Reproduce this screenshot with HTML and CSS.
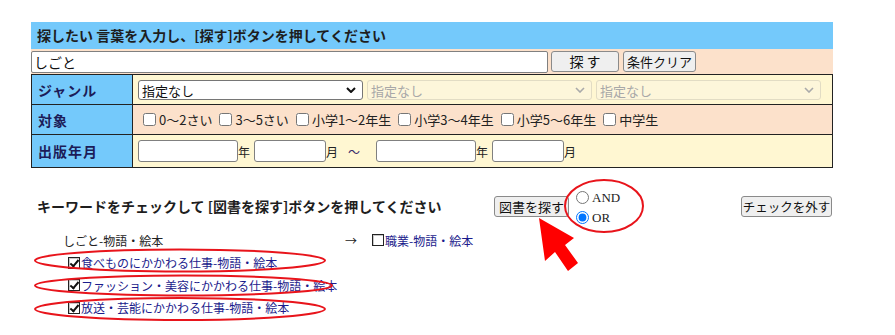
FILE: index.html
```html
<!DOCTYPE html>
<html lang="ja">
<head>
  <meta charset="UTF-8">
  <title>絵本をさがす</title>
  <link rel="stylesheet" href="styles.css">
</head>
<body>
  <div class="page">
    <form class="search">
      <div class="search-title">探したい 言葉を入力し、[探す]ボタンを押してください</div>
      <div class="search-bar">
        <input class="keyword" type="text" value="しごと">
        <button type="button" class="btn btn-search">探 す</button>
        <button type="button" class="btn btn-clear">条件クリア</button>
      </div>

      <table class="conditions">
        <tr class="row-genre">
          <th>ジャンル</th>
          <td>
            <div class="cell">
              <span class="select-wrap">
                <select class="genre"><option>指定なし</option></select>
                <svg class="chevron" width="10" height="6" viewBox="0 0 10 6"><path d="M1 1 L5 5 L9 1" fill="none" stroke="#111" stroke-width="2"/></svg>
              </span>
              <span class="select-wrap">
                <select class="genre" disabled><option>指定なし</option></select>
                <svg class="chevron" width="10" height="6" viewBox="0 0 10 6"><path d="M1 1 L5 5 L9 1" fill="none" stroke="#aaa" stroke-width="1.6"/></svg>
              </span>
              <span class="select-wrap">
                <select class="genre" disabled><option>指定なし</option></select>
                <svg class="chevron" width="10" height="6" viewBox="0 0 10 6"><path d="M1 1 L5 5 L9 1" fill="none" stroke="#aaa" stroke-width="1.6"/></svg>
              </span>
            </div>
          </td>
        </tr>
        <tr class="row-target">
          <th>対象</th>
          <td>
            <div class="cell ages">
              <label><input type="checkbox">0〜2さい</label>
              <label><input type="checkbox">3〜5さい</label>
              <label><input type="checkbox">小学1〜2年生</label>
              <label><input type="checkbox">小学3〜4年生</label>
              <label><input type="checkbox">小学5〜6年生</label>
              <label><input type="checkbox">中学生</label>
            </div>
          </td>
        </tr>
        <tr class="row-date">
          <th>出版年月</th>
          <td>
            <div class="cell dates">
              <input class="year" type="text"><span>年</span>
              <input class="month" type="text"><span>月</span>
              <span class="tilde">〜</span>
              <input class="year" type="text"><span>年</span>
              <input class="month" type="text"><span>月</span>
            </div>
          </td>
        </tr>
      </table>
    </form>

    <div class="result">
      <div class="actions">
        <h3>キーワードをチェックして [図書を探す]ボタンを押してください</h3>
        <button type="button" class="btn btn-books">図書を探す</button>
        <div class="mode">
          <label><input type="radio" name="mode">AND</label>
          <label><input type="radio" name="mode" checked>OR</label>
        </div>
        <button type="button" class="btn btn-uncheck">チェックを外す</button>
      </div>

      <ul class="keywords">
        <li class="origin">
          <span class="origin-word">しごと-物語・絵本</span>
          <span class="arrow">→</span>
          <label><input type="checkbox" class="kw"><a href="#">職業-物語・絵本</a></label>
        </li>
        <li><label><input type="checkbox" class="kw" checked><a href="#">食べものにかかわる仕事-物語・絵本</a></label></li>
        <li><label><input type="checkbox" class="kw" checked><a href="#">ファッション・美容にかかわる仕事-物語・絵本</a></label></li>
        <li><label><input type="checkbox" class="kw" checked><a href="#">放送・芸能にかかわる仕事-物語・絵本</a></label></li>
      </ul>
    </div>

    <!-- 説明用の書き込み -->
    <svg class="marks" width="895" height="335" viewBox="0 0 895 335">
      <g fill="none" stroke="#e8141b" stroke-width="2">
        <ellipse cx="604" cy="206" rx="39" ry="26"/>
        <ellipse cx="180" cy="260.5" rx="145" ry="11"/>
        <ellipse cx="183.5" cy="285.5" rx="148.5" ry="10"/>
        <ellipse cx="180" cy="309" rx="145" ry="11"/>
      </g>
      <polygon fill="#ff0000" points="539,218 574,238 565,245 578,263 568,271 555,252 545,261"/>
    </svg>
  </div>
</body>
</html>
```

FILE: styles.css
```css
body { margin: 0; background: #fff; color: #222; font-family: "Noto Sans CJK JP", "Noto Sans", sans-serif; }
.page { position: relative; width: 895px; height: 335px; padding-top: 22px; box-sizing: border-box; overflow: hidden; }

.search { margin: 0 0 0 31px; width: 802px; }
.search-title { background: #74c9fb; height: 27px; line-height: 27px; padding-left: 6px; font-size: 14px; font-weight: bold; color: #1e1e1e; }
.search-bar { background: #fce1cb; height: 25px; display: flex; align-items: center; }
.keyword { width: 517px; height: 22px; box-sizing: border-box; margin: 0; padding: 0 2px; border: 1px solid #808080; border-radius: 2px; font: 14px "Noto Sans CJK JP", sans-serif; color: #111; }

.btn { height: 21px; padding: 0; box-sizing: border-box; background: #efefef; border: 1px solid #8a8a8a; border-radius: 3px; color: #111; font-family: "Noto Sans CJK JP", sans-serif; font-size: 13px; line-height: 19px; white-space: nowrap; cursor: pointer; }
.btn-search { width: 68px; margin-left: 3px; font-size: 14px; }
.btn-clear { width: 73px; margin-left: 4px; }

.conditions { width: 802px; border-collapse: collapse; border: 1px solid #222; }
.conditions th, .conditions td { border: 1px solid #222; padding: 0; }
.conditions th { width: 94px; padding-left: 6px; background: #74c9fb; color: #1c1c58; font-size: 14px; text-align: left; letter-spacing: 1px; }
.row-genre td, .row-date td { background: #fff7d2; }
.row-target td { background: #fce1cb; }
.row-genre th, .row-genre td { height: 29px; }
.row-target th, .row-target td { height: 29px; }
.row-date th, .row-date td { height: 32px; }

.cell { display: flex; align-items: center; padding-left: 5px; font-size: 12px; }
.select-wrap { position: relative; display: inline-block; margin-right: 4px; }
.genre { appearance: none; width: 225px; height: 20px; margin: 0; padding: 0 3px; box-sizing: border-box; border: 1px solid #767676; border-radius: 3px; background: #fff; font: 13px "Noto Sans CJK JP", sans-serif; color: #111; }
.genre:disabled { background: #fdf6da; border-color: #e2dcc4; color: #a8a8a8; opacity: 1; }
.chevron { position: absolute; right: 7px; top: 7px; }

.ages { padding-left: 10px; gap: 7px; font-size: 13px; }
.ages label { display: flex; align-items: center; gap: 3px; color: #222; }
.ages input { width: 13px; height: 13px; margin: 0; }

.dates span { color: #222; font-size: 12px; }
.dates input { height: 22px; box-sizing: border-box; margin: 0; border: 1px solid #808080; border-radius: 3px; background: #fff; }
.dates .year { width: 100px; }
.dates .month { width: 72px; margin-left: 4px; }
.dates .tilde { margin: 0 16px 0 10px; color: #3a2a6a; }

.result { margin-left: 31px; width: 802px; }
.actions { display: flex; align-items: center; height: 36px; margin-top: 20px; }
.actions h3 { width: 457px; margin: 0; padding-left: 6px; font-size: 14px; font-weight: bold; color: #1e1e1e; }
.btn-books { width: 75px; font-size: 13px; }
.mode { display: flex; flex-direction: column; margin: 3px 0 0 7px; font-family: "Liberation Serif", serif; font-size: 13px; color: #222; }
.mode label { display: flex; align-items: center; height: 20px; gap: 3px; }
.mode input { width: 13px; height: 13px; margin: 0; }
.btn-uncheck { width: 91px; margin-left: auto; margin-right: 1px; font-size: 12.5px; }

.keywords { list-style: none; margin: 5px 0 0; padding: 0; font-size: 12px; }
.keywords li { display: flex; align-items: center; height: 22.5px; padding-left: 37px; }
.keywords li.origin { padding-left: 32px; }
.origin-word { width: 282px; color: #222; }
.arrow { width: 27px; color: #222; }
.keywords label { display: flex; align-items: center; gap: 1px; }
.keywords a { color: #1b1b8c; text-decoration: none; }

.kw { appearance: none; position: relative; width: 12px; height: 12px; margin: 0; border: 1px solid #222; background: #fff; box-shadow: inset 1px 1px 0 #c8c8c8; }
.kw:checked::after { content: ""; position: absolute; left: 3px; top: 0; width: 3px; height: 7px; border: solid #111; border-width: 0 2px 2px 0; transform: rotate(40deg); }

.marks { position: absolute; left: 0; top: 0; pointer-events: none; }
```
